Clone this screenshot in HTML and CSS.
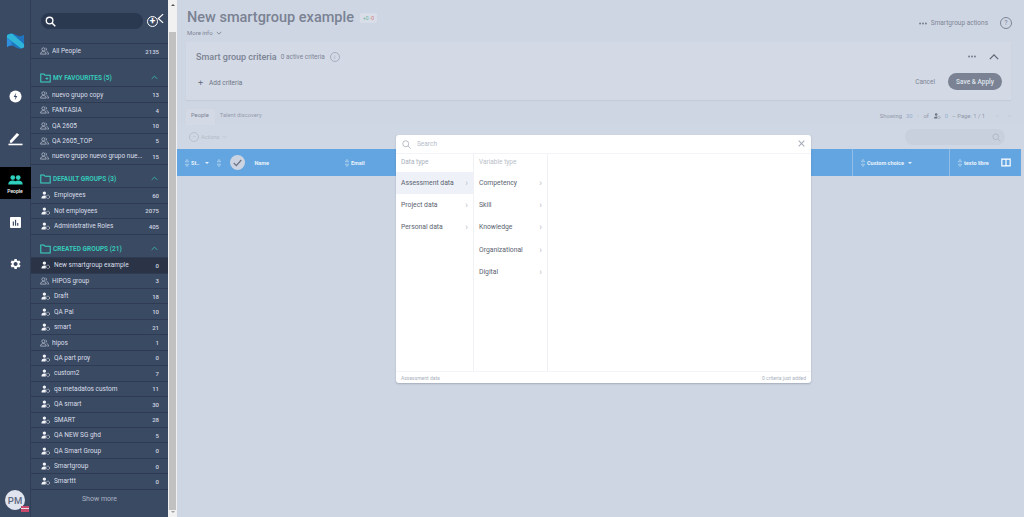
FILE: index.html
```html
<!DOCTYPE html>
<html lang="en">
<head>
<meta charset="utf-8">
<title>New smartgroup example</title>
<link rel="stylesheet" href="styles.css">
</head>
<body>
<svg class="defs" width="0" height="0" aria-hidden="true">
  <defs>
    <symbol id="outline" viewBox="0 0 16 14"><g fill="none" stroke="currentColor" stroke-width="1.2"><circle cx="6" cy="4" r="2.7"/><path d="M1 12.5c0-3 2-4.5 5-4.5s5 1.500 5 4.500z"/><path d="M10 1.600a2.700 2.700 0 0 1 0 5M12 8.200c2 .5 3.300 2 3.300 4.300h-2.300"/></g></symbol>
    <symbol id="solid" viewBox="0 0 16 14"><circle cx="6" cy="3.600" r="3" fill="currentColor"/><path d="M.8 13c0-3.300 2-5 5.200-5 1.200 0 2.200.2 3 .7-.7 1-1 2.500-.6 4.300z" fill="currentColor"/><circle cx="12.300" cy="10.300" r="3" fill="none" stroke="currentColor" stroke-width="1.300" stroke-dasharray="2 1"/></symbol>
    <symbol id="dots" viewBox="0 0 9 3"><circle cx="1.200" cy="1.500" r="1" fill="currentColor"/><circle cx="4.500" cy="1.500" r="1" fill="currentColor"/><circle cx="7.800" cy="1.500" r="1" fill="currentColor"/></symbol>
    <symbol id="sorter" viewBox="0 0 5 9"><path d="M2.500 0L4.500 3h-4zM2.500 9L.5 6h4z" fill="none" stroke="currentColor" stroke-width=".7"/></symbol>
  </defs>
</svg>
<div class="app">
  <nav class="rail">
    <svg class="logo" viewBox="0 0 20 20"><path d="M1 3.500C4 1 7 1 10 3c3 2 6 2 9 0v13c-3 2-6 2-9 0-3-2-6-2-9 0z" fill="#1f74c0"/><path d="M1 3.500C3 2 5 1.600 7 2l12 11v3c-1 .7-2 1.100-3 1.300L1 6z" fill="#2fb5d8"/><path d="M1 6l5 4.500V14c-2-.3-3.500 .8-5 2z" fill="#2f8fdc"/></svg>
    <div class="rail-item first"><svg viewBox="0 0 14 14" width="13" height="13"><circle cx="7" cy="7" r="6.500" fill="#fff"/><path d="M7.800 3L5 7.600h2L6.200 11 9 6.400H7z" fill="#3b4a63"/></svg></div>
    <div class="rail-item"><svg viewBox="0 0 16 16" width="15" height="15"><path d="M2 10.500L9.500 2l2.500 2L4 12.500H2z" fill="#fff"/><rect x="0.500" y="13.500" width="15" height="1.700" fill="#fff"/></svg></div>
    <div class="rail-item active"><svg viewBox="0 0 16 11" width="15" height="10"><circle cx="5" cy="2.800" r="2.600" fill="#2fd0bd"/><circle cx="11" cy="2.800" r="2.600" fill="#2fd0bd"/><path d="M0 10.500c0-3 2-4.500 5-4.500 1.200 0 2.200.3 3 .8.800-.5 1.800-.8 3-.8 3 0 5 1.500 5 4.500z" fill="#2fd0bd"/></svg><span>People</span></div>
    <div class="rail-item"><svg viewBox="0 0 12 12" width="11" height="11"><rect width="12" height="12" rx="1" fill="#fff"/><path d="M3 5h1.300v4.500H3zM5.400 3h1.300v6.500H5.400zM7.800 6.500h1.300v3H7.800z" fill="#3b4a63"/></svg></div>
    <div class="rail-item"><svg viewBox="0 0 24 24" width="14" height="14"><path fill="#fff" d="M19.400 13a7.600 7.600 0 0 0 0-2l2.100-1.600-2-3.500-2.500 1a7.500 7.500 0 0 0-1.700-1L15 3.300h-4l-.4 2.600a7.500 7.500 0 0 0-1.700 1l-2.500-1-2 3.500L6.500 11a7.600 7.600 0 0 0 0 2l-2.100 1.600 2 3.500 2.500-1a7.500 7.500 0 0 0 1.700 1l.4 2.600h4l.4-2.600a7.500 7.500 0 0 0 1.700-1l2.500 1 2-3.500zM13 15.500a3.500 3.500 0 1 1 0-7 3.500 3.500 0 0 1 0 7z"/></svg></div>
    <div class="avatar">PM<span class="flag"></span></div>
  </nav>

  <aside class="side">
    <div class="side-top">
      <div class="search-pill"><svg viewBox="0 0 12 12" width="11" height="11"><circle cx="5" cy="5" r="3.600" fill="none" stroke="#fff" stroke-width="1.500"/><path d="M7.700 7.700l3.500 3.500" stroke="#fff" stroke-width="1.700"/></svg></div>
      <span class="add-circle">+</span>
      <svg class="collapse" viewBox="0 0 8 12" width="7" height="11"><path d="M7 1L1.500 6 7 11" fill="none" stroke="#fff" stroke-width="1.400"/></svg>
    </div>
    <ul class="rows all">
      <li class="row"><svg class="ic"><use href="#outline"/></svg><span class="nm">All People</span><b>2135</b></li>
    </ul>
    <h2 class="sec fav"><svg viewBox="0 0 14 12" width="11" height="10"><path d="M1 1h4l1.500 1.500H13V11H1z" fill="none" stroke="#3ad6c4" stroke-width="1.300"/><path d="M7 6.700h3.500M8.800 5v3.400" stroke="#3ad6c4"/></svg><span>MY FAVOURITES (5)</span><svg class="up" viewBox="0 0 10 6" width="7" height="5"><path d="M1 5l4-4 4 4" fill="none" stroke="#3ad6c4"/></svg></h2>
    <ul class="rows">
      <li class="row"><svg class="ic"><use href="#outline"/></svg><span class="nm">nuevo grupo copy</span><b>13</b></li>
      <li class="row"><svg class="ic"><use href="#outline"/></svg><span class="nm">FANTASIA</span><b>4</b></li>
      <li class="row"><svg class="ic"><use href="#outline"/></svg><span class="nm">QA 2605</span><b>10</b></li>
      <li class="row"><svg class="ic"><use href="#outline"/></svg><span class="nm">QA 2605_TOP</span><b>5</b></li>
      <li class="row"><svg class="ic"><use href="#outline"/></svg><span class="nm">nuevo grupo nuevo grupo nue...</span><b>15</b></li>
    </ul>
    <h2 class="sec"><svg viewBox="0 0 14 12" width="11" height="10"><path d="M1 1h4l1.500 1.500H13V11H1z" fill="none" stroke="#3ad6c4" stroke-width="1.300"/></svg><span>DEFAULT GROUPS (3)</span><svg class="up" viewBox="0 0 10 6" width="7" height="5"><path d="M1 5l4-4 4 4" fill="none" stroke="#3ad6c4"/></svg></h2>
    <ul class="rows">
      <li class="row sm"><svg class="ic"><use href="#solid"/></svg><span class="nm">Employees</span><b>60</b></li>
      <li class="row sm"><svg class="ic"><use href="#solid"/></svg><span class="nm">Not employees</span><b>2075</b></li>
      <li class="row sm"><svg class="ic"><use href="#solid"/></svg><span class="nm">Administrative Roles</span><b>405</b></li>
    </ul>
    <h2 class="sec"><svg viewBox="0 0 14 12" width="11" height="10"><path d="M1 1h4l1.500 1.500H13V11H1z" fill="none" stroke="#3ad6c4" stroke-width="1.300"/></svg><span>CREATED GROUPS (21)</span><svg class="up" viewBox="0 0 10 6" width="7" height="5"><path d="M1 5l4-4 4 4" fill="none" stroke="#3ad6c4"/></svg></h2>
    <ul class="rows">
      <li class="row sm current"><svg class="ic"><use href="#solid"/></svg><span class="nm">New smartgroup example</span><b>0</b></li>
      <li class="row"><svg class="ic"><use href="#outline"/></svg><span class="nm">HIPOS group</span><b>3</b></li>
      <li class="row sm"><svg class="ic"><use href="#solid"/></svg><span class="nm">Draft</span><b>18</b></li>
      <li class="row sm"><svg class="ic"><use href="#solid"/></svg><span class="nm">QA Pal</span><b>10</b></li>
      <li class="row sm"><svg class="ic"><use href="#solid"/></svg><span class="nm">smart</span><b>21</b></li>
      <li class="row"><svg class="ic"><use href="#outline"/></svg><span class="nm">hipos</span><b>1</b></li>
      <li class="row sm"><svg class="ic"><use href="#solid"/></svg><span class="nm">QA part proy</span><b>0</b></li>
      <li class="row sm"><svg class="ic"><use href="#solid"/></svg><span class="nm">custom2</span><b>7</b></li>
      <li class="row sm"><svg class="ic"><use href="#solid"/></svg><span class="nm">qa metadatos custom</span><b>11</b></li>
      <li class="row sm"><svg class="ic"><use href="#solid"/></svg><span class="nm">QA smart</span><b>30</b></li>
      <li class="row sm"><svg class="ic"><use href="#solid"/></svg><span class="nm">SMART</span><b>28</b></li>
      <li class="row sm"><svg class="ic"><use href="#solid"/></svg><span class="nm">QA NEW SG ghd</span><b>5</b></li>
      <li class="row sm"><svg class="ic"><use href="#solid"/></svg><span class="nm">QA Smart Group</span><b>0</b></li>
      <li class="row sm"><svg class="ic"><use href="#solid"/></svg><span class="nm">Smartgroup</span><b>0</b></li>
      <li class="row sm"><svg class="ic"><use href="#solid"/></svg><span class="nm">Smarttt</span><b>0</b></li>
    </ul>
    <div class="more">Show more</div>
  </aside>

  <div class="scrollbar"><span class="arrow top"></span><span class="thumb"></span><span class="arrow bottom"></span></div>

  <main class="main">
    <header class="head">
      <div class="head-left">
        <div class="title-line"><h1>New smartgroup example</h1><span class="delta"><i class="g">+0</i> <i class="r">-0</i></span></div>
        <div class="more-info">More info <svg viewBox="0 0 8 5" width="6" height="4"><path d="M1 1l3 3 3-3" fill="none" stroke="#6d7585"/></svg></div>
      </div>
      <div class="head-right"><svg class="dots"><use href="#dots"/></svg><span>Smartgroup actions</span><span class="help">?</span></div>
    </header>

    <section class="criteria">
      <div class="crit-top">
        <div class="crit-title"><strong>Smart group criteria</strong><span>0 active criteria</span><span class="info">i</span></div>
        <div class="crit-ctrl"><svg class="dots"><use href="#dots"/></svg><svg viewBox="0 0 12 7" width="10" height="6"><path d="M1 6l5-5 5 5" fill="none" stroke="#5d6676" stroke-width="1.500"/></svg></div>
      </div>
      <div class="crit-bottom">
        <div class="add"><span class="plus">+</span>Add criteria</div>
        <div class="crit-btns"><span class="cancel">Cancel</span><span class="save">Save &amp; Apply</span></div>
      </div>
    </section>

    <div class="tabs-line">
      <div class="tabs"><span class="tab on">People</span><span class="tab">Talent discovery</span></div>
      <div class="pager">Showing <em>30</em> <span class="faint">&lt;</span> of <svg class="pg-ic"><use href="#solid"/></svg> <em>0</em> – Page: 1 / 1 <span class="faint gap">&lt;</span><span class="faint">&gt;</span></div>
    </div>

    <div class="tools">
      <div class="actions"><span class="act-c">–</span>Actions <svg viewBox="0 0 8 5" width="5" height="4"><path d="M1 1l3 3 3-3" fill="none" stroke="#b3bbc9"/></svg></div>
      <div class="tbl-search"><svg viewBox="0 0 12 12" width="9" height="9"><circle cx="5" cy="5" r="3.800" fill="none" stroke="#b0b8c6" stroke-width="1.300"/><path d="M8 8l3 3" stroke="#b0b8c6" stroke-width="1.300"/></svg></div>
    </div>

    <div class="thead">
      <div class="th th-st"><svg class="srt"><use href="#sorter"/></svg><span>St..</span><span class="caret"></span><svg class="srt sort"><use href="#sorter"/></svg><span class="check"><svg viewBox="0 0 12 10" width="9" height="8"><path d="M1 5l3.500 3.500L11 1" fill="none" stroke="#6d7585" stroke-width="1.800"/></svg></span><span class="th-name">Name</span></div>
      <div class="th th-email"><svg class="srt"><use href="#sorter"/></svg><span>Email</span></div>
      <div class="th th-c1"></div>
      <div class="th th-custom"><svg class="srt"><use href="#sorter"/></svg><span>Custom choice</span><span class="caret"></span></div>
      <div class="th th-texto"><span class="th-lbl"><svg class="srt"><use href="#sorter"/></svg><span>texto libre</span></span><svg viewBox="0 0 12 10" width="10" height="9"><path d="M1 1h10v8H1zM6 1v8" fill="none" stroke="#fff" stroke-width="1.400"/></svg></div>
    </div>
  </main>

  <div class="modal">
    <div class="m-search"><svg viewBox="0 0 12 12" width="9" height="9"><circle cx="5" cy="5" r="4" fill="none" stroke="#a3abb8"/><path d="M8 8l3.500 3.500" stroke="#a3abb8"/></svg><span>Search</span><svg class="m-x" viewBox="0 0 10 10" width="7" height="7"><path d="M1 1l8 8M9 1l-8 8" stroke="#a6adb9" stroke-width="1.500"/></svg></div>
    <div class="m-cols">
      <div class="m-col c1">
        <div class="m-h">Data type</div>
        <div class="m-i sel">Assessment data<i>›</i></div>
        <div class="m-i">Project data<i>›</i></div>
        <div class="m-i">Personal data<i>›</i></div>
      </div>
      <div class="m-col c2">
        <div class="m-h">Variable type</div>
        <div class="m-i">Competency<i>›</i></div>
        <div class="m-i">Skill<i>›</i></div>
        <div class="m-i">Knowledge<i>›</i></div>
        <div class="m-i">Organizational<i>›</i></div>
        <div class="m-i">Digital<i>›</i></div>
      </div>
      <div class="m-col c3"></div>
    </div>
    <div class="m-foot"><span>Assessment data</span><span>0 criteria just added</span></div>
  </div>
</div>
</body>
</html>
```
FILE: styles.css
```css
* { box-sizing: border-box; }
html, body { margin: 0; height: 517px; overflow: hidden; }
body { font-family: Roboto, "Liberation Sans", sans-serif; background: #cfd6e3; color: #6d7585; }
.defs { position: absolute; }
ul { list-style: none; margin: 0; padding: 0; }
i, em { font-style: normal; }
.app { display: flex; width: 1024px; height: 517px; position: relative; }

.rail { width: 31px; flex: none; background: #3b4a63; border-right: 1px solid #303d54; display: flex; flex-direction: column; align-items: center; position: relative; }
.logo { width: 19px; height: 19px; margin-top: 32px; flex: none; }
.rail-item { height: 42px; width: 31px; flex: none; display: flex; flex-direction: column; align-items: center; justify-content: center; color: #fff; font-size: 5px; font-weight: 500; }
.rail-item.first { margin-top: 24px; }
.rail-item.active { background: #000; height: 32px; margin: 8px 0 2px; gap: 3px; justify-content: flex-end; padding-bottom: 5px; }
.avatar { position: absolute; left: 5px; top: 490px; width: 20px; height: 20px; border-radius: 50%; background: #dfe4ee; color: #5d6880; font-size: 9.500px; font-weight: 500; display: flex; align-items: center; justify-content: center; }
.flag { position: absolute; right: -4px; bottom: -2px; width: 8px; height: 6px; background: linear-gradient(#c9496c 0 35%, #e8dfe6 35% 55%, #c9496c 55%); }

.side { width: 137px; flex: none; background: #3b4a63; color: #d9dfe9; display: flex; flex-direction: column; font-size: 6.500px; }
.side-top { height: 43px; position: relative; display: flex; align-items: flex-start; flex: none; }
.search-pill { position: absolute; left: 10px; top: 13px; width: 102px; height: 16px; border-radius: 8px; background: #2a3850; display: flex; align-items: center; padding-left: 4px; }
.add-circle { position: absolute; left: 116px; top: 16px; width: 11px; height: 11px; border-radius: 50%; border: 1px solid #fff; color: #fff; font-size: 10px; line-height: 8px; text-align: center; font-weight: 700; }
.collapse { position: absolute; left: 126px; top: 13px; }
.rows { border-top: 1px solid #2e3b52; flex: none; }
.row { height: 15.450px; display: flex; align-items: center; padding: 0 9px 0 9px; border-bottom: 1px solid #2e3b52; color: #d9dfe9; }
.row .ic { width: 9px; height: 8px; flex: none; margin-right: 3px; color: #c4ccd9; }
.row.sm .ic { margin-right: 4px; color: #f2f4f8; }
.row.sm { padding-left: 10px; }
.row .nm { flex: 1; white-space: nowrap; overflow: hidden; }
.row b { font-weight: 500; font-size: 6px; color: #cfd6e1; }
.row.current { background: #2a3446; }
.sec { height: 17px; margin: 5.600px 0 0; padding: 0 10px 0 9px; display: flex; align-items: center; gap: 2px; font-size: 6.500px; font-weight: 700; color: #35c9b9; flex: none; }
.sec.fav { margin-top: 10px; }
.sec span { flex: 1; }
.more { text-align: center; color: #aab3c3; font-size: 7px; margin-top: 5px; }

.scrollbar { width: 9px; flex: none; background: #f1f1f1; position: relative; }
.thumb { position: absolute; left: 1px; right: 1px; top: 32px; bottom: 7px; background: #c1c1c1; }
.arrow { position: absolute; left: 3px; border: 2px solid transparent; }
.arrow.top { top: 2px; border-bottom-color: #555; }
.arrow.bottom { bottom: 2px; border-top-color: #a0a0a0; }

.main { flex: 1; min-width: 0; background: #cfd6e3; display: flex; flex-direction: column; }
.head { height: 42px; display: flex; justify-content: space-between; padding: 9px 12px 0 10px; flex: none; }
h1 { margin: 0; font-size: 14.500px; font-weight: 500; color: #7a8293; line-height: 17px; }
.title-line { display: flex; align-items: center; gap: 6px; }
.delta { background: #d8dde8; font-size: 5px; padding: 2px 3px; border-radius: 2px; }
.delta .g { color: #6fb7a3; }
.delta .r { color: #d37b80; }
.more-info { font-size: 6px; color: #7d8596; margin-top: 3px; display: flex; align-items: center; gap: 3px; }
.head-right { display: flex; align-items: center; font-size: 6.500px; color: #7d8596; height: 28px; }
.dots { width: 8px; height: 3px; margin-right: 4px; color: #6d7585; }
.help { width: 12px; height: 12px; border: 1px solid #7d8596; border-radius: 50%; margin-left: 12px; font-size: 7px; display: flex; align-items: center; justify-content: center; }

.criteria { height: 58px; margin: 0 13px 0 9px; background: #d3d9e5; box-shadow: 0 1px 1px #c4cbd9; padding: 6px 9px 0 10px; flex: none; display: flex; flex-direction: column; }
.crit-top { display: flex; justify-content: space-between; align-items: center; height: 17px; }
.crit-title { display: flex; align-items: center; gap: 4px; font-size: 6.500px; color: #7d8596; }
.crit-title strong { font-size: 9px; font-weight: 500; color: #7a8293; }
.info { width: 10px; height: 10px; border: 1px solid #a6afbf; border-radius: 50%; font-size: 6px; text-align: center; line-height: 8px; margin-left: 1px; color: #a6afbf; }
.crit-ctrl { display: flex; align-items: center; gap: 13px; padding-right: 3px; }
.crit-ctrl .dots { margin: 0; }
.crit-bottom { display: flex; justify-content: space-between; align-items: center; margin-top: 8px; }
.add { font-size: 6.500px; color: #6d7585; display: flex; align-items: center; gap: 6px; padding: 2px 0 0 2px; }
.plus { font-size: 9px; line-height: 8px; }
.crit-btns { display: flex; align-items: center; gap: 13px; }
.cancel { font-size: 6.500px; color: #7d8596; }
.save { width: 54px; height: 17px; border-radius: 9px; background: #7a8293; color: #dfe4ec; font-size: 6.500px; font-weight: 500; display: flex; align-items: center; justify-content: center; }

.tabs-line { display: flex; justify-content: space-between; align-items: flex-end; height: 25px; padding: 0 13px 0 9px; flex: none; }
.tabs { display: flex; font-size: 5.800px; color: #959dad; }
.tab { padding: 3px 6px 5px 5px; height: 16px; }
.tab.on { background: #d3d9e5; border-radius: 3px 3px 0 0; color: #7d8596; }
.pager { font-size: 5.800px; color: #9098a8; padding-bottom: 6px; display: flex; align-items: center; gap: 4px; }
.pager em { color: #92aed0; }
.pg-ic { width: 8px; height: 6px; color: #6d7585; }
.faint { color: #c0c7d4; }
.gap { margin-left: 7px; margin-right: 5px; }

.tools { height: 24px; flex: none; display: flex; justify-content: space-between; align-items: center; background: #d0d7e4; padding: 0 19px 0 12px; }
.actions { font-size: 5.500px; color: #b3bbc9; display: flex; align-items: center; gap: 2px; }
.act-c { width: 10px; height: 10px; border: 1px solid #b8c0cd; border-radius: 50%; text-align: center; line-height: 7px; }
.tbl-search { width: 100px; height: 16px; border-radius: 8px; background: #c8d0de; display: flex; justify-content: flex-end; align-items: center; padding-right: 4px; }

.thead { height: 27px; margin-right: 3px; display: flex; background: #62a5e0; color: #e9f2fb; font-size: 5.500px; font-weight: 700; flex: none; }
.th { display: flex; align-items: center; border-right: 1px solid #90c0ea; padding-left: 8px; gap: 2px; }
.srt { width: 4px; height: 8px; color: #d4e5f6; flex: none; }
.th-st { width: 160px; border: 0; }
.th-email { width: 105px; border: 0; }
.th-c1 { width: 411px; }
.th-custom { width: 97px; }
.th-custom .caret { margin-left: 2px; }
.th-texto { flex: 1; border: 0; justify-content: space-between; padding-right: 10px; }
.th-lbl { display: flex; align-items: center; gap: 2px; }
.caret { width: 0; height: 0; border: 2.500px solid transparent; border-top-color: #e9f2fb; border-bottom: 0; display: inline-block; margin-left: 4px; }
.sort { margin-left: 6px; }
.check { width: 15px; height: 15px; border-radius: 50%; background: #ccd4e1; display: flex; align-items: center; justify-content: center; margin-left: 7px; }
.th-name { margin-left: 7px; }

.modal { position: absolute; left: 396px; top: 135px; width: 415px; height: 248px; background: #fff; border-radius: 3px; box-shadow: 0 1px 2px rgba(80,90,110,.35); display: flex; flex-direction: column; color: #5c6472; }
.m-search { height: 19px; display: flex; align-items: center; padding: 0 6px; gap: 6px; font-size: 6.500px; color: #b5bcc8; border-bottom: 1px solid #f3f4f7; flex: none; }
.m-x { margin-left: auto; margin-top: -2px; }
.m-cols { flex: 1; display: flex; min-height: 0; }
.m-col { border-right: 1px solid #f0f1f4; }
.c1 { width: 78px; }
.c2 { width: 74px; }
.c3 { flex: 1; border: 0; }
.m-h { height: 18px; font-size: 6.500px; color: #a9b0bc; padding: 4px 5px 0; }
.c2 .m-h { color: #b8bec8; }
.m-i { height: 22.200px; display: flex; align-items: center; justify-content: space-between; padding: 0 5px; font-size: 6.800px; color: #5a6270; }
.m-i i { color: #b5bbc6; font-size: 9px; }
.m-i.sel { background: #eef2f8; }
.m-foot { height: 12px; display: flex; justify-content: space-between; align-items: center; padding: 0 5px; border-top: 1px solid #f3f4f7; font-size: 5px; color: #aab1bc; flex: none; }
```
